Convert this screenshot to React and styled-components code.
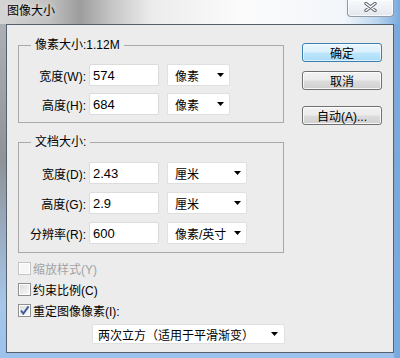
import styled, { createGlobalStyle } from "styled-components";

const GlobalStyle = createGlobalStyle`
  html, body {
    margin: 0;
    padding: 0;
  }
  body {
    width: 400px;
    height: 358px;
    overflow: hidden;
    font-family: "Liberation Sans", "Noto Sans CJK SC", sans-serif;
    font-size: 12px;
    color: #000;
  }
  * {
    box-sizing: border-box;
  }
`;

const Window = styled.div`
  width: 400px;
  height: 358px;
  display: flex;
  flex-direction: column;
  background:
    linear-gradient(
        90deg,
        #d4d4d4 0%,
        #c2c2c2 12%,
        #9d9d9d 20%,
        #c6c6c6 28%,
        #ececec 38%,
        #fbfbfb 60%,
        #f3f6fa 86%,
        #bdd7f1 94%,
        #78aadf 100%
      )
      top / 100% 24px no-repeat,
    linear-gradient(90deg, transparent 393px, #78aadf 395px),
    linear-gradient(180deg, #b2b5b9 0%, #8f9397 45%, #a6c6ea 85%, #9cc2ec 100%);
`;

const TitleBar = styled.div`
  height: 24px;
  flex: none;
  display: flex;
  justify-content: space-between;
  align-items: flex-start;
  padding: 0 6px 0 7px;
`;

const Title = styled.div`
  margin-top: 1px;
  line-height: 18px;
  font-size: 12px;
  font-family: "Noto Sans CJK SC", sans-serif;
  text-shadow: 0 0 6px rgba(255, 255, 255, 0.9);
`;

const CloseButton = styled.div`
  width: 47px;
  height: 17px;
  display: flex;
  align-items: center;
  justify-content: center;
  padding-bottom: 2px;
  border: 1px solid rgba(70, 80, 95, 0.55);
  border-top: none;
  border-radius: 0 0 4px 4px;
  background: linear-gradient(180deg, #f8fafc 0%, #eef1f5 50%, #e2e7ee 100%);
  box-shadow: inset 0 0 0 1px rgba(255, 255, 255, 0.7);
`;

const Client = styled.div`
  flex: 1;
  margin: 0 6px 5px 6px;
  border: 1px solid #56616e;
  background: #ececec;
  display: flex;
  gap: 18px;
  padding: 0 11px;
`;

const LeftCol = styled.div`
  width: 266px;
  display: flex;
  flex-direction: column;
`;

const Group = styled.fieldset`
  margin: ${(p) => p.$top}px 0 0 0;
  padding: ${(p) => p.$padTop}px 0 ${(p) => p.$padBottom}px 0;
  border: 1px solid #a9a9a9;
  min-width: 0;
  display: flex;
  flex-direction: column;
  gap: ${(p) => p.$gap}px;
`;

const Legend = styled.legend`
  margin-left: 12px;
  padding: 0 4px;
  line-height: 14px;
  font-size: 12px;
`;

const Row = styled.div`
  display: flex;
  align-items: center;
  height: 22px;
`;

const Label = styled.div`
  width: 67px;
  text-align: right;
  white-space: nowrap;
  margin-right: 3px;
`;

const Field = styled.div`
  width: 70px;
  height: 22px;
  margin-right: 8px;
  padding: 0 3px;
  display: flex;
  align-items: center;
  background: #fff;
  border: 1px solid #dcdcdc;
  border-radius: 2px;
  font-size: 13px;
`;

const Select = styled.div`
  width: ${(p) => p.$w}px;
  height: ${(p) => p.$h || 22}px;
  margin-left: ${(p) => p.$left || 0}px;
  padding: 0 ${(p) => p.$padRight || 5}px 0 ${(p) => p.$padLeft || 7}px;
  display: flex;
  align-items: center;
  justify-content: space-between;
  background: #fff;
  border: 1px solid #e0e0e0;
  border-radius: 2px;
  white-space: nowrap;
`;

const Arrow = () => (
  <svg width="7" height="4" viewBox="0 0 7 4">
    <polygon points="0,0 7,0 3.5,4" fill="#000" />
  </svg>
);

const CheckList = styled.div`
  margin-top: 5px;
  display: flex;
  flex-direction: column;
`;

const CheckRow = styled.div`
  height: 21px;
  display: flex;
  align-items: center;
  gap: 2px;
  color: ${(p) => (p.$disabled ? "#a3a3a3" : "#000")};
`;

const Box = styled.div`
  width: 13px;
  height: 13px;
  flex: none;
  display: flex;
  align-items: center;
  justify-content: center;
  border: 1px solid ${(p) => (p.$disabled ? "#c4c4c4" : "#8e8f8f")};
  background: ${(p) =>
    p.$disabled
      ? "#f6f6f6"
      : "linear-gradient(135deg, #d9dadc 0%, #eeeeef 60%, #fbfbfb 100%)"};
  box-shadow: inset 0 0 0 1px #fff;
`;

const Check = () => (
  <svg width="11" height="11" viewBox="0 0 11 11">
    <path
      d="M2 5.5 L4.3 8.6 L9.6 1.4"
      fill="none"
      stroke="#3d5c9c"
      strokeWidth="1.9"
    />
  </svg>
);

const RightCol = styled.div`
  width: 80px;
  padding-top: 18px;
  display: flex;
  flex-direction: column;
`;

const Button = styled.div`
  height: 19px;
  margin-top: ${(p) => p.$top || 0}px;
  display: flex;
  align-items: center;
  justify-content: center;
  border-radius: 3px;
  border: 1px solid ${(p) => (p.$primary ? "#3c7fb1" : "#707070")};
  background: ${(p) =>
    p.$primary
      ? "linear-gradient(180deg, #eaf6fd 0%, #d9f0fc 48%, #bee6fd 52%, #a9dbf6 100%)"
      : "linear-gradient(180deg, #f2f2f2 0%, #ebebeb 48%, #dddddd 52%, #cfcfcf 100%)"};
  box-shadow: inset 0 0 0 1px
    ${(p) => (p.$primary ? "rgba(255,255,255,0.55)" : "rgba(255,255,255,0.8)")};
  white-space: nowrap;
`;

const CloseIcon = () => (
  <svg width="13" height="10" viewBox="0 0 13 10">
    <path d="M2 1.5 L11 8.5 M11 1.5 L2 8.5" stroke="#5b6370" strokeWidth="3.4" strokeLinecap="round" />
    <path d="M2 1.5 L11 8.5 M11 1.5 L2 8.5" stroke="#fff" strokeWidth="1.5" strokeLinecap="round" />
  </svg>
);

const pixelRows = [
  { label: "宽度(W):", value: "574", unit: "像素" },
  { label: "高度(H):", value: "684", unit: "像素" },
];

const docRows = [
  { label: "宽度(D):", value: "2.43", unit: "厘米" },
  { label: "高度(G):", value: "2.9", unit: "厘米" },
  { label: "分辨率(R):", value: "600", unit: "像素/英寸" },
];

const checks = [
  { text: "缩放样式(Y)", disabled: true },
  { text: "约束比例(C)" },
  { text: "重定图像像素(I):", checked: true },
];

export default function App() {
  return (
    <>
      <GlobalStyle />
      <Window>
        <TitleBar>
          <Title>图像大小</Title>
          <CloseButton>
            <CloseIcon />
          </CloseButton>
        </TitleBar>
        <Client>
          <LeftCol>
            <Group $top={13} $padTop={12} $padBottom={7} $gap={7}>
              <Legend>像素大小:1.12M</Legend>
              {pixelRows.map((r) => (
                <Row key={r.label}>
                  <Label>{r.label}</Label>
                  <Field>{r.value}</Field>
                  <Select $w={63}>
                    <span>{r.unit}</span>
                    <Arrow />
                  </Select>
                </Row>
              ))}
            </Group>
            <Group $top={12} $padTop={13} $padBottom={8} $gap={8}>
              <Legend>文档大小:</Legend>
              {docRows.map((r) => (
                <Row key={r.label}>
                  <Label>{r.label}</Label>
                  <Field>{r.value}</Field>
                  <Select $w={80}>
                    <span>{r.unit}</span>
                    <Arrow />
                  </Select>
                </Row>
              ))}
            </Group>
            <CheckList>
              {checks.map((c) => (
                <CheckRow key={c.text} $disabled={c.disabled}>
                  <Box $disabled={c.disabled}>{c.checked && <Check />}</Box>
                  <span>{c.text}</span>
                </CheckRow>
              ))}
            </CheckList>
            <Select $w={193} $h={20} $left={74} $padLeft={5} $padRight={6} style={{ marginTop: 3 }}>
              <span>两次立方（适用于平滑渐变）</span>
              <Arrow />
            </Select>
          </LeftCol>
          <RightCol>
            <Button $primary>确定</Button>
            <Button $top={9}>取消</Button>
            <Button $top={16}>自动(A)...</Button>
          </RightCol>
        </Client>
      </Window>
    </>
  );
}
